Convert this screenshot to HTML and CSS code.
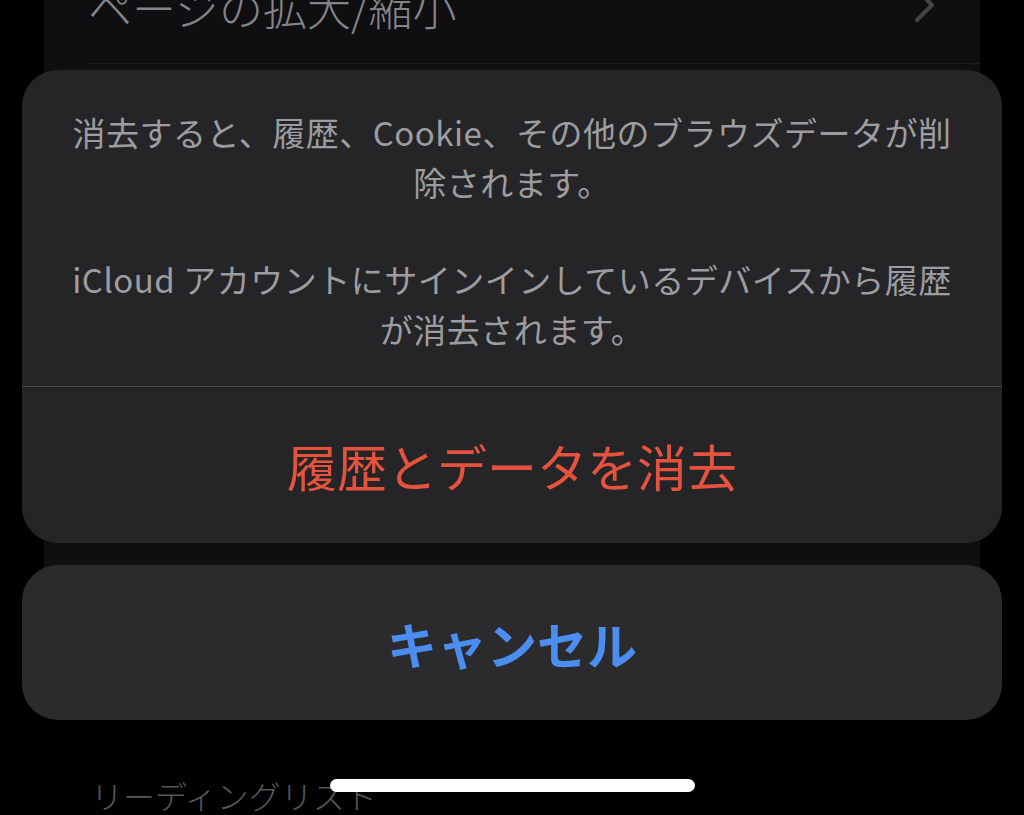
FILE: index.html
```html
<!DOCTYPE html>
<html lang="ja">
<head>
<meta charset="utf-8">
<title>履歴とデータを消去</title>
<link rel="stylesheet" href="styles.css">
</head>
<body>
<div class="screen">
  <div class="settings">
    <div class="row">
      <span class="row-label">ページの拡大/縮小</span>
      <svg class="chevron" width="24" height="40" viewBox="0 0 24 40"><polyline points="4,0 19,15 4,30" fill="none" stroke="#444446" stroke-width="4" stroke-linecap="round" stroke-linejoin="round"/></svg>
    </div>
  </div>
  <div class="section-header">リーディングリスト</div>

  <div class="sheet">
    <div class="card">
      <div class="message">
        <p>消去すると、履歴、Cookie、その他のブラウズデータが削<br>除されます。</p>
        <p>iCloud アカウントにサインインしているデバイスから履歴<br>が消去されます。</p>
      </div>
      <div class="action destructive">履歴とデータを消去</div>
    </div>
    <div class="card cancel">キャンセル</div>
  </div>

  <div class="home-indicator"></div>
</div>
</body>
</html>
```

FILE: styles.css
```css
html, body {
  margin: 0;
  padding: 0;
  background: #000;
}

body {
  font-family: "Noto Sans CJK JP", "Noto Sans", sans-serif;
}

.screen {
  position: relative;
  width: 1024px;
  height: 815px;
  overflow: hidden;
  background: #000;
}

.settings {
  margin: 0 44px;
  height: 600px;
  background: #0f0f11;
}

.row {
  margin-left: 44px;
  height: 63px;
  border-bottom: 1px solid #1d1d1f;
  display: flex;
  align-items: flex-start;
  justify-content: space-between;
  padding-right: 43px;
}

.row-label {
  margin-top: -15px;
  font-size: 44px;
  line-height: 44px;
  font-weight: 300;
  color: #858589;
}

.chevron {
  margin-top: -10px;
}

.section-header {
  margin: 175px 0 0 91px;
  font-size: 32px;
  line-height: 40px;
  font-weight: 300;
  color: #58585b;
}

.sheet {
  position: absolute;
  top: 70px;
  left: 22px;
  width: 980px;
  display: flex;
  flex-direction: column;
  gap: 22px;
}

.card {
  background: #252527;
  border-radius: 36px;
  overflow: hidden;
}

.message {
  padding: 37px 20px 32px;
  text-align: center;
  color: #9d9da1;
  font-size: 33px;
  line-height: 50px;
  letter-spacing: 0.5px;
  border-bottom: 1px solid #48484a;
}

.message p {
  margin: 0;
}

.message p + p {
  margin-top: 47px;
}

.action {
  height: 156px;
  display: flex;
  align-items: center;
  justify-content: center;
  font-size: 50px;
}

.destructive {
  color: #e5533f;
}

.cancel {
  height: 155px;
  display: flex;
  align-items: center;
  justify-content: center;
  background: #2b2b2d;
  color: #4c8df0;
  font-size: 50px;
  font-weight: 700;
}

.home-indicator {
  position: absolute;
  left: 330px;
  top: 779px;
  width: 365px;
  height: 13px;
  border-radius: 7px;
  background: #fff;
}
```
